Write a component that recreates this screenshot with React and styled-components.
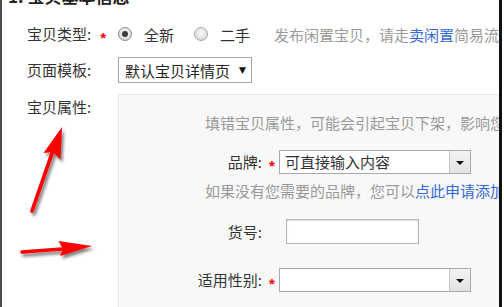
import React from 'react';
import styled, { createGlobalStyle } from 'styled-components';

const Global = createGlobalStyle`
  html, body { margin: 0; padding: 0; background: #fff; }
  body {
    font-family: "Noto Sans CJK SC", "Microsoft YaHei", sans-serif;
    font-size: 15px;
    color: #333;
  }
`;

const Page = styled.div`
  position: relative;
  width: 502px;
  height: 307px;
  box-sizing: border-box;
  border-left: 2px solid #4b4b4b;
  border-right: 3px solid #111;
  overflow: hidden;
`;

const Title = styled.h2`
  margin: -15px 0 0 6px;
  font-size: 17px;
  font-weight: bold;
  line-height: 21px;
  color: #222;
  white-space: nowrap;
`;

const Form = styled.div`
  padding-left: 25px;
`;

const Row = styled.div`
  display: flex;
  align-items: ${p => (p.$top ? 'flex-start' : 'center')};
  margin-top: ${p => p.$mt}px;
  height: ${p => (p.$h ? `${p.$h}px` : 'auto')};
  white-space: nowrap;
`;

const Label = styled.div`
  width: 91px;
  flex: none;
  display: flex;
  align-items: center;
  line-height: 20px;
  color: #333;
  padding-top: ${p => p.$pt || 0}px;
`;

const Star = styled.span`
  color: #f00;
  font-family: "Liberation Sans", sans-serif;
  font-size: 15px;
  font-weight: bold;
  line-height: 1;
  padding-top: 6px;
  margin-left: ${p => p.$ml ?? 9}px;
`;

const RadioGroup = styled.label`
  display: flex;
  align-items: center;
  margin-right: 20px;
`;

const RadioDot = styled.span`
  width: 14px;
  height: 14px;
  border-radius: 50%;
  box-sizing: border-box;
  border: 1px solid ${p => (p.$on ? '#8a8a8a' : '#a9a9a9')};
  background: radial-gradient(circle at 50% 40%, #fafafa 0%, #dcdcdc 70%, #c8c8c8 100%);
  display: flex;
  align-items: center;
  justify-content: center;
  margin-right: 12px;
  &::after {
    content: '';
    display: ${p => (p.$on ? 'block' : 'none')};
    width: 6px;
    height: 6px;
    border-radius: 50%;
    background: #3c3c3c;
  }
`;

const Muted = styled.span`
  color: #999;
  margin-left: ${p => p.$ml || 0}px;
`;

const Link = styled.span`
  color: #3568d4;
`;

const PlainSelect = styled.div`
  width: 134px;
  height: 26px;
  box-sizing: border-box;
  border: 1px solid #a6a6a6;
  background: #fff;
  display: flex;
  align-items: center;
  justify-content: space-between;
  padding: 0 5px 0 6px;
  color: #222;
  font-size: 15px;
  & > i {
    font-style: normal;
    font-family: "DejaVu Sans", sans-serif;
    font-size: 9px;
    color: #111;
  }
`;

const Panel = styled.div`
  flex: 1;
  height: 240px;
  background: #f8f8f8;
  border-top: 1px solid #e6e6e6;
  border-left: 1px solid #ececec;
  padding-top: 18px;
`;

const Note = styled.div`
  padding-left: 86px;
  line-height: 20px;
  color: #999;
  white-space: nowrap;
  margin-top: ${p => p.$mt || 0}px;
`;

const Field = styled.div`
  display: flex;
  align-items: center;
  margin-top: ${p => p.$mt}px;
`;

const FieldLabel = styled.div`
  width: 143px;
  flex: none;
  text-align: right;
  line-height: 20px;
  color: #333;
`;

const StarCell = styled.div`
  width: 17px;
  flex: none;
  display: flex;
  padding-left: 7px;
  box-sizing: border-box;
`;

const Combo = styled.div`
  width: 192px;
  height: 24px;
  box-sizing: border-box;
  border: 1px solid #a9a9a9;
  background: #fff;
  display: flex;
`;

const ComboText = styled.div`
  flex: 1;
  padding-left: 5px;
  line-height: 22px;
  color: #333;
`;

const ComboButton = styled.div`
  width: 20px;
  border-left: 1px solid #c4c4c4;
  background: linear-gradient(#f4f4f4, #e2e2e2);
  display: flex;
  align-items: center;
  justify-content: center;
  &::after {
    content: '';
    border-left: 4px solid transparent;
    border-right: 4px solid transparent;
    border-top: 4px solid #111;
    margin-top: 2px;
  }
`;

const TextInput = styled.div`
  width: 133px;
  height: 25px;
  box-sizing: border-box;
  margin-left: 7px;
  border: 1px solid #b4b4b4;
  background: #fff;
  box-shadow: inset 0 1px 2px rgba(0, 0, 0, 0.12);
`;

const Overlay = styled.svg`
  position: absolute;
  left: -2px;
  top: 0;
  pointer-events: none;
`;

function Arrows() {
  return (
    <Overlay width="504" height="307" viewBox="0 0 504 307">
      <defs>
        <filter id="sh" x="-50%" y="-50%" width="200%" height="200%">
          <feDropShadow dx="2" dy="3" stdDeviation="1.6" floodColor="#000" floodOpacity="0.5" />
        </filter>
      </defs>
      <g filter="url(#sh)" fill="#ff0000">
        <path d="M32 211 L52.5 152" stroke="#ff0000" strokeWidth="3.8" strokeLinecap="round" fill="none" />
        <polygon points="62,127 60.5,159.5 53,152 43.5,153" />
        <path d="M22 252 L62 249" stroke="#ff0000" strokeWidth="3.6" strokeLinecap="round" fill="none" />
        <polygon points="92,246 60,256 63,248.7 58.5,241" />
      </g>
    </Overlay>
  );
}

export default function App() {
  return (
    <>
      <Global />
      <Page>
        <Title>1. 宝贝基本信息</Title>
        <Form>
          <Row $mt={16} $h={24}>
            <Label>
              宝贝类型:<Star>*</Star>
            </Label>
            <RadioGroup>
              <RadioDot $on />
              全新
            </RadioGroup>
            <RadioGroup>
              <RadioDot />
              二手
            </RadioGroup>
            <Muted $ml={4}>
              发布闲置宝贝，请走<Link>卖闲置</Link>简易流程发布
            </Muted>
          </Row>
          <Row $mt={11}>
            <Label>页面模板:</Label>
            <PlainSelect>
              默认宝贝详情页<i>▼</i>
            </PlainSelect>
          </Row>
          <Row $mt={11} $top>
            <Label $pt={3}>宝贝属性:</Label>
            <Panel>
              <Note>填错宝贝属性，可能会引起宝贝下架，影响您的正常销售</Note>
              <Field $mt={17}>
                <FieldLabel>品牌:</FieldLabel>
                <StarCell>
                  <Star $ml={0}>*</Star>
                </StarCell>
                <Combo>
                  <ComboText>可直接输入内容</ComboText>
                  <ComboButton />
                </Combo>
              </Field>
              <Note $mt={7}>
                如果没有您需要的品牌，您可以<Link>点此申请添加品牌</Link>
              </Note>
              <Field $mt={18}>
                <FieldLabel>货号:</FieldLabel>
                <StarCell />
                <TextInput />
              </Field>
              <Field $mt={24}>
                <FieldLabel>适用性别:</FieldLabel>
                <StarCell>
                  <Star $ml={0}>*</Star>
                </StarCell>
                <Combo>
                  <ComboText />
                  <ComboButton />
                </Combo>
              </Field>
            </Panel>
          </Row>
        </Form>
        <Arrows />
      </Page>
    </>
  );
}
